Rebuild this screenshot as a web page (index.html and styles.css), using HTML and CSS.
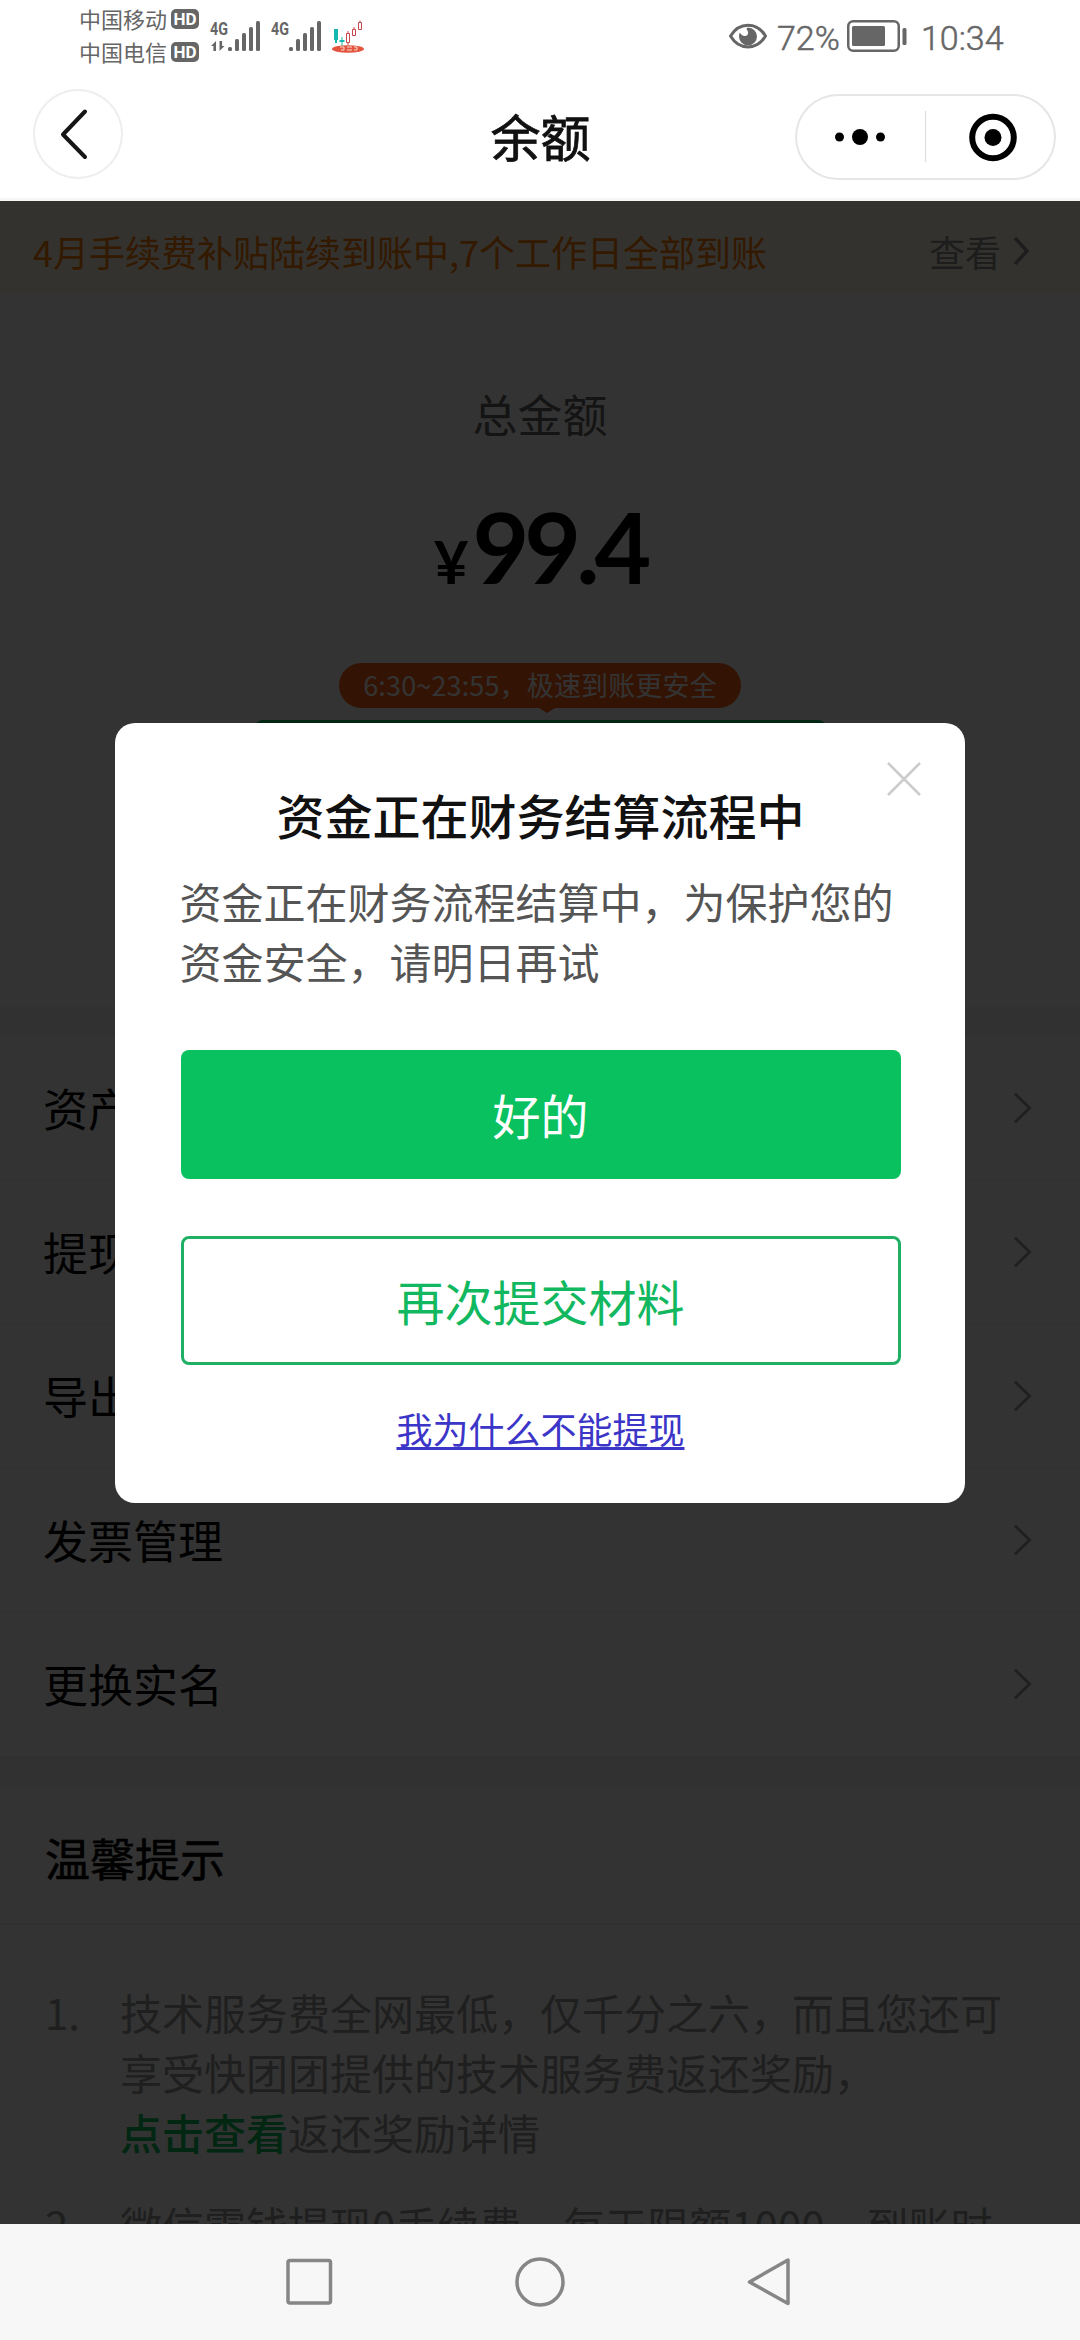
FILE: index.html
```html
<!DOCTYPE html>
<html lang="zh-CN">
<head>
<meta charset="utf-8">
<title>余额</title>
<link rel="stylesheet" href="styles.css">
</head>
<body>
<div class="screen">
  <header class="status">
    <div class="carriers">
      <div class="carrier"><span>中国移动</span><b class="hd">HD</b></div>
      <div class="carrier"><span>中国电信</span><b class="hd">HD</b></div>
    </div>
    <svg class="signals" width="160" height="40" viewBox="208 17 160 40">
      <g fill="#666">
        <text class="net" x="210" y="34.5" textLength="18" lengthAdjust="spacingAndGlyphs">4G</text>
        <text class="net" x="271" y="34.5" textLength="18" lengthAdjust="spacingAndGlyphs">4G</text>
        <path d="M211 46l5-5v10h-2.600v-5zM224.500 46l-5 5V41h2.600v5z"/>
        <rect x="228" y="47" width="4" height="4" rx="1.500"/><rect x="235" y="39" width="4" height="12" rx="1.500"/><rect x="242" y="33" width="4" height="18" rx="1.500"/><rect x="249" y="27" width="4" height="24" rx="1.500"/><rect x="256" y="21" width="4" height="30" rx="1.500"/>
        <rect x="289" y="47" width="4" height="4" rx="1.500"/><rect x="296" y="39" width="4" height="12" rx="1.500"/><rect x="303" y="33" width="4" height="18" rx="1.500"/><rect x="310" y="27" width="4" height="24" rx="1.500"/><rect x="317" y="21" width="4" height="30" rx="1.500"/>
      </g>
      <path fill="#15b8b0" d="M334 29h4v11h-1v3h-2v-3h-1zM341.500 37h1v3h2v2h-2v4h-1v-4h-2v-2h2z"/>
      <g fill="none" stroke="#c8474b" stroke-width="1"><path d="M346.500 33.500h3v9h-3zM352.500 29.500h3v6h-3zM358.500 22.500h3v7h-3zM348 31v2M354 27v2M348 43v2M360 20.500v2"/></g>
      <ellipse cx="348" cy="49" rx="16" ry="3.800" fill="#e2553f"/>
      <path d="M340 47h4v3h-3M347 47h5M347 50h5M354 47h3v3h-3" fill="none" stroke="#fbd6c8" stroke-width="1"/>
    </svg>
    <div class="status-right">
      <svg class="eye" width="38" height="26" viewBox="0 0 38 26"><path d="M1.500 13C10-1.500 28-1.500 36.500 13 28 27.500 10 27.500 1.500 13z" fill="none" stroke="#666" stroke-width="3"/><path d="M19 4.500a9 9 0 1 1-9 9c0-1.600.3-2.800.9-4 1.200 2.600 3.600 4 5.800 3.400 2.700-.7 3.300-3.700 1.200-6.200-.5-.6-.5-1.900 1.100-2.200z" fill="#666"/></svg>
      <span class="percent">72%</span>
      <svg class="battery" width="60" height="32" viewBox="0 0 60 32"><rect x="1.250" y="1.250" width="50.500" height="29.500" rx="5" fill="none" stroke="#666" stroke-width="2.500"/><rect x="5" y="6" width="33" height="20" rx="1.500" fill="#666"/><rect x="55.500" y="8" width="4" height="17" rx="1.500" fill="#666"/></svg>
      <span class="clock">10:34</span>
    </div>
  </header>

  <nav class="navbar">
    <button class="back"><svg width="90" height="90" viewBox="0 0 90 90"><path d="M52 22.500L30 45.500 52 68" fill="none" stroke="#161616" stroke-width="4" stroke-linecap="round" stroke-linejoin="round"/></svg></button>
    <h1>余额</h1>
    <div class="capsule">
      <svg width="261" height="86" viewBox="0 0 261 86"><circle cx="44.500" cy="43" r="4.500"/><circle cx="65" cy="43" r="8"/><circle cx="85.500" cy="43" r="4.500"/><path d="M130.500 17v51" stroke="#dedede" stroke-width="1.200"/><circle cx="198" cy="43.500" r="20.800" fill="none" stroke="#000" stroke-width="6"/><circle cx="198" cy="43.500" r="8.500"/></svg>
    </div>
  </nav>

  <main class="content">
    <div class="notice">
      <span>4月手续费补贴陆续到账中,7个工作日全部到账</span>
      <span class="notice-more">查看<svg width="18" height="30" viewBox="0 0 18 30"><path d="M2 2l12 13L2 28" fill="none" stroke="#909090" stroke-width="3.500"/></svg></span>
    </div>
    <section class="balance">
      <div class="label">总金额</div>
      <div class="amount"><span class="yen">¥</span><span class="figure">99.4</span></div>
      <div class="bubble">6:30~23:55，极速到账更安全</div>
      <div class="withdraw"></div>
    </section>
    <ul class="menu">
      <li>资产明细<i class="arrow"></i></li>
      <li>提现记录<i class="arrow"></i></li>
      <li>导出账单<i class="arrow"></i></li>
      <li>发票管理<i class="arrow"></i></li>
      <li>更换实名<i class="arrow"></i></li>
    </ul>
    <section class="tips">
      <h2>温馨提示</h2>
      <div class="tip"><span class="num">1.</span><p>技术服务费全网最低，仅千分之六，而且您还可享受快团团提供的技术服务费返还奖励，<br><b>点击查看</b>返还奖励详情</p></div>
      <div class="tip"><span class="num">2.</span><p>微信零钱提现0手续费，每天限额1000，到账时</p></div>
    </section>

    <div class="mask"></div>
    <div class="dialog">
      <svg class="close" width="34" height="34" viewBox="0 0 34 34"><path d="M1 1l32 32M33 1L1 33" stroke="#ccc" stroke-width="2.500"/></svg>
      <h3>资金正在财务结算流程中</h3>
      <p>资金正在财务流程结算中，为保护您的资金安全，请明日再试</p>
      <button class="btn primary">好的</button>
      <button class="btn outline">再次提交材料</button>
      <a class="why">我为什么不能提现</a>
    </div>
  </main>

  <footer class="sysnav">
    <svg width="1080" height="116" viewBox="0 0 1080 116"><g fill="none" stroke="#868686" stroke-width="3.500" stroke-linejoin="round"><rect x="288" y="36.500" width="42.500" height="42.500" rx="2"/><circle cx="540" cy="58" r="23"/><path d="M788 36v43.500L749.500 58z"/></g></svg>
  </footer>
</div>
</body>
</html>
```
FILE: styles.css
```css
* { box-sizing: border-box; margin: 0; padding: 0; }
body { width: 1080px; height: 2340px; overflow: hidden; background: #fff; font-family: "Noto Sans CJK SC", sans-serif; color: #000; }
button { font: inherit; background: none; border: 0; }
svg { display: block; flex: none; }
.screen { width: 1080px; height: 2340px; display: flex; flex-direction: column; }

.status { height: 75px; display: flex; align-items: flex-start; padding-left: 79px; color: #666; }
.carriers { width: 129px; padding-top: 3px; }
.carrier { height: 33px; display: flex; align-items: center; gap: 4px; font-size: 22px; font-weight: 400; line-height: 31px; padding-bottom: 2px; }
.hd { width: 28px; height: 20px; border-radius: 5px; background: #666; color: #fff; font: 700 17px/20px Roboto, sans-serif; text-align: center; }
.signals { margin-top: 17px; }
.net { font: 700 18px Roboto, sans-serif; }
.status-right { display: flex; align-items: center; height: 32px; margin: 20px 0 0 361px; font: 300 34px/32px Roboto, sans-serif; -webkit-text-stroke: 0.5px #666; }
.eye { margin-right: 10px; }
.percent { width: 70px; padding-top: 4px; }
.battery { margin-right: 14px; }
.clock { padding-top: 4px; }

.navbar { height: 126px; display: flex; align-items: flex-start; justify-content: space-between; padding: 14px 24px 0 33px; border-bottom: 3px solid #f6f6f6; }
.back { width: 90px; height: 90px; border-radius: 45px; box-shadow: inset 0 0 0 2px #eee; }
.navbar h1 { font-size: 50px; font-weight: 400; line-height: 93px; padding-left: 163px; color: #111; -webkit-text-stroke: 0.8px #111; }
.capsule { width: 261px; height: 86px; margin-top: 5px; border-radius: 43px; box-shadow: inset 0 0 0 2px #e6e6e6; }

.content { position: relative; height: 2023px; overflow: hidden; background: #f5f5f5; }
.notice { height: 93px; padding: 0 49px 0 33px; display: flex; justify-content: space-between; align-items: center; background: #fffbe8; color: #ff7d00; font-size: 36px; line-height: 93px; }
.notice > span { margin-top: 7px; }
.notice-more { display: flex; align-items: center; gap: 12px; color: #909090; }
.balance { height: 713px; background: #fff; display: flex; flex-direction: column; align-items: center; }
.label { margin-top: 87px; font-size: 45px; line-height: 66px; color: #666; }
.amount { height: 100px; margin-top: 49px; display: flex; align-items: baseline; font-family: Lato, sans-serif; font-weight: 700; line-height: 100px; }
.yen { font-size: 60px; }
.figure { font-size: 98px; letter-spacing: -5px; margin-left: 4px; }
.bubble { position: relative; width: 402px; height: 45px; margin-top: 67px; border-radius: 23px; background: #ff6010; color: #fff; font-size: 27px; line-height: 44px; text-align: center; white-space: nowrap; letter-spacing: 0.15px; }
.bubble::after { content: ""; position: absolute; left: 200px; top: 45px; border: 8px solid transparent; border-top: 5px solid #ff6010; border-bottom: 0; }
.withdraw { width: 571px; height: 120px; margin-top: 12px; border-radius: 8px; background: #07c160; }

.menu { margin-top: 30px; background: #fff; list-style: none; }
.menu li { height: 144px; padding: 0 48px 2px 43px; display: flex; justify-content: space-between; align-items: center; font-size: 45px; border-bottom: 1px solid #eee; }
.arrow { width: 22px; height: 22px; margin-right: 5px; border: solid #a0a0a0; border-width: 3px 3px 0 0; transform: rotate(45deg); }
.tips { margin-top: 31px; height: 500px; background: #fff; }
.tips h2 { height: 137px; padding-left: 45px; border-bottom: 2px solid #ededed; font-size: 45px; font-weight: 400; line-height: 140px; -webkit-text-stroke: 0.6px #000; }
.tip { display: flex; padding: 0 70px 0 45px; font-size: 42px; line-height: 60px; color: #999; }
.tips h2 + .tip { margin-top: 57px; }
.tip + .tip { margin-top: 33px; }
.num { width: 75px; flex: none; }
.tip p { width: 890px; flex: none; }
.tip b { font-weight: 500; color: #07c160; }

.mask { position: absolute; inset: 0; background: rgba(0, 0, 0, 0.8); }
.dialog { position: absolute; left: 115px; top: 522px; width: 850px; height: 780px; padding: 55px 64px 0 65px; border-radius: 20px; background: #fff; display: flex; flex-direction: column; align-items: center; }
.close { position: absolute; left: 772px; top: 39px; }
.dialog h3 { font-size: 48px; font-weight: 500; line-height: 72px; color: #111; }
.dialog p { width: 722px; margin-top: 21px; font-size: 42px; line-height: 60px; color: #555; }
.btn { width: 720px; height: 129px; flex: none; border-radius: 8px; font-size: 48px; line-height: 127px; }
.primary { margin-top: 59px; background: #09c15f; color: #fff; }
.outline { margin-top: 57px; border: 3px solid #1fb065; color: #12b85f; line-height: 121px; }
.why { margin-top: 36px; font-size: 36px; line-height: 54px; color: #3b35c8; text-decoration: underline; text-decoration-thickness: 3px; text-underline-offset: 3px; text-decoration-skip-ink: none; }

.sysnav { height: 116px; background: #f7f7f7; }
```
